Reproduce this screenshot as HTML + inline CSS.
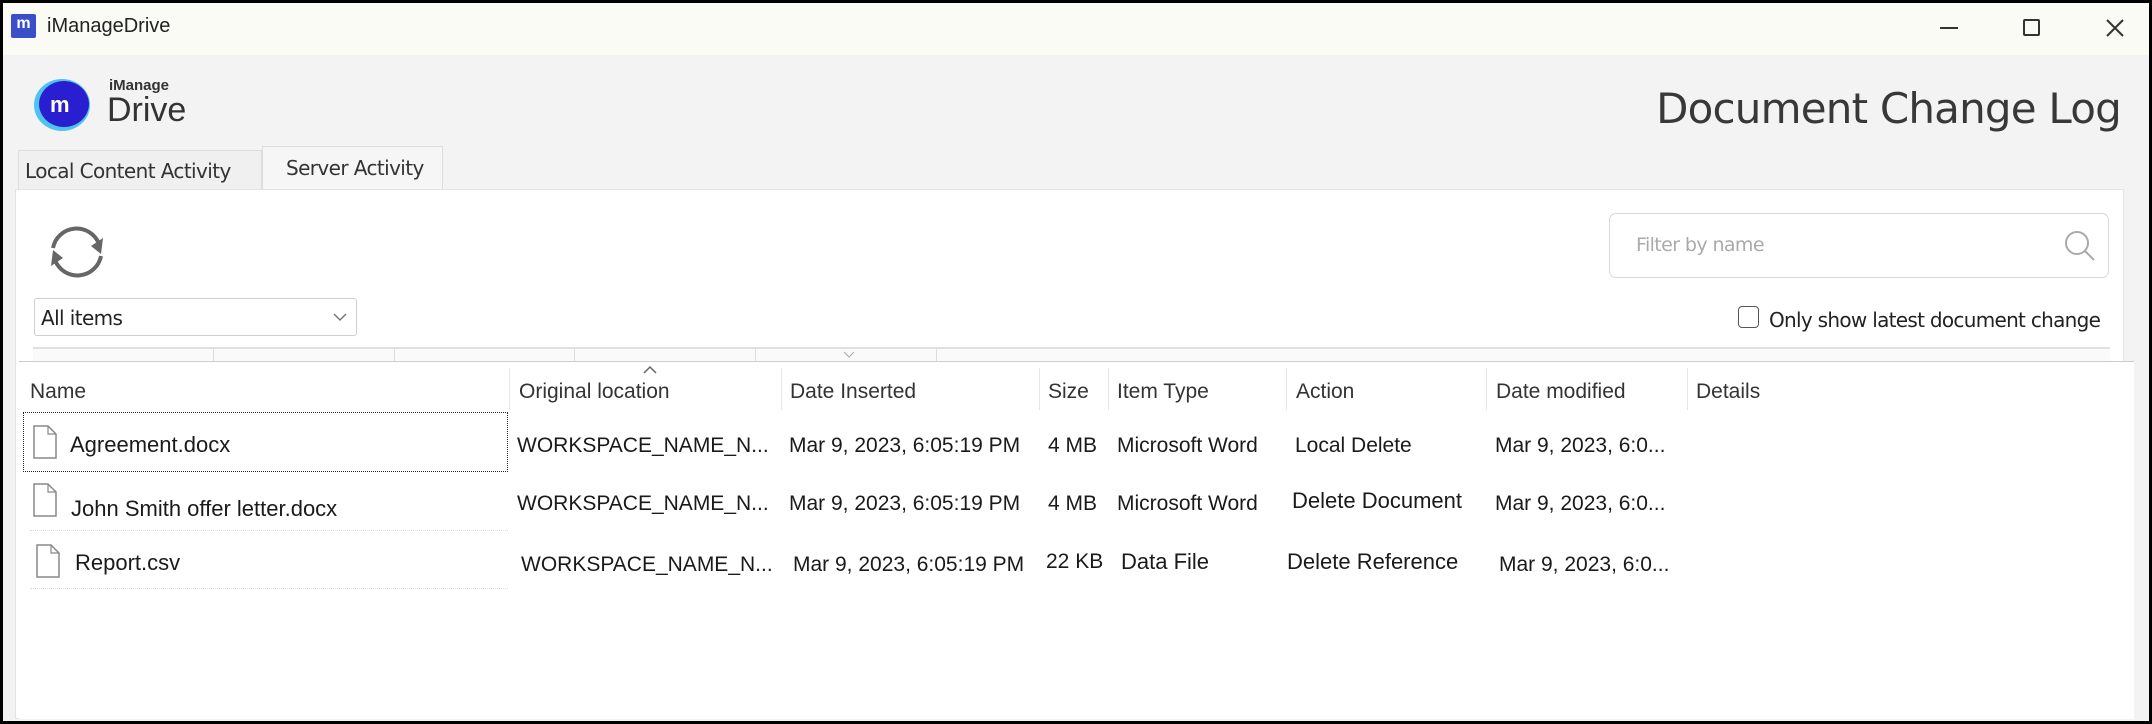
<!DOCTYPE html>
<html><head><meta charset="utf-8"><style>
*{margin:0;padding:0;box-sizing:border-box}
body{width:2152px;height:724px;background:#000;position:relative;overflow:hidden;font-family:"Liberation Sans Narrow","Liberation Sans",sans-serif;color:#222}
.a{position:absolute;white-space:nowrap}
#win{position:absolute;left:3px;top:3px;width:2146px;height:718px;background:#f3f3f3}
#tb{position:absolute;left:0;top:0;width:2146px;height:52px;background:#fbfbf5}
.t{font-size:21px;line-height:24px;color:#1a1a1a}
.h{font-size:21px;line-height:24px;color:#333}
.sep{position:absolute;top:365px;width:1px;height:42px;background:#e6e6e6}
</style></head><body>
<div id="win">
<div id="tb">
<div class="a" style="left:8px;top:11px;width:25px;height:24px;background:#3b4fc8;border-radius:2px;color:#fff;font:bold 16px 'Liberation Sans';text-align:center;line-height:20px">m</div>
<div class="a" style="left:44px;top:12px;font:20px 'Liberation Sans',sans-serif;color:#222">iManageDrive</div>
<div class="a" style="left:1937px;top:24px;width:18px;height:2px;background:#333"></div>
<div class="a" style="left:2020px;top:16px;width:17px;height:17px;border:2px solid #333;border-radius:2px"></div>
<svg class="a" style="left:2102px;top:15px" width="20" height="20"><path d="M2 2L18 18M18 2L2 18" stroke="#333" stroke-width="2"/></svg>
</div>
<svg class="a" style="left:30px;top:72px" width="60" height="60"><ellipse cx="29" cy="30" rx="28" ry="26" fill="#4fc3f0"/><ellipse cx="31" cy="29" rx="25" ry="23" fill="#2a1fd0"/><text x="17" y="37" font-family="Liberation Sans" font-size="22" font-weight="bold" fill="#fff">m</text></svg>
<div class="a" style="left:106px;top:74px;font:bold 15px 'Liberation Sans';color:#333">iManage</div>
<div class="a" style="left:104px;top:88px;font:34px 'Liberation Sans';color:#333">Drive</div>
<div class="a" style="right:28px;top:81px;font:42px 'DejaVu Sans',sans-serif;color:#383838;letter-spacing:-0.8px">Document Change Log</div>
<div class="a" style="left:15px;top:147px;width:244px;height:42px;background:#f0f0f0;border:1px solid #ddd;border-bottom:none"></div>
<div class="a" style="left:22px;top:156px;font:20px 'DejaVu Sans',sans-serif;color:#333;letter-spacing:-0.6px">Local Content Activity</div>
<div class="a" style="left:259px;top:143px;width:181px;height:46px;background:#f6f6f6;border:1px solid #ddd;border-bottom:none"></div>
<div class="a" style="left:283px;top:153px;font:20px 'DejaVu Sans',sans-serif;color:#333;letter-spacing:-0.6px">Server Activity</div>
<div class="a" style="left:12px;top:186px;width:2109px;height:530px;background:#fff;border:1px solid #e4e4e4"></div>
<svg class="a" style="left:38px;top:213px" width="72" height="72"><g fill="none" stroke="#666" stroke-width="4"><path d="M12 32A24 24 0 0 1 58 28"/><path d="M60 40A24 24 0 0 1 14 44"/></g><path d="M62 22L60 38L50 30Z" fill="#666"/><path d="M10 50L12 34L22 42Z" fill="#666"/></svg>
<div class="a" style="left:31px;top:295px;width:323px;height:38px;border:1px solid #cfcfcf;border-radius:3px;background:#fff"></div>
<div class="a" style="left:38px;top:303px;font:20px 'DejaVu Sans',sans-serif;color:#222;letter-spacing:-0.6px">All items</div>
<svg class="a" style="left:330px;top:309px" width="14" height="10"><path d="M1 2L7 8L13 2" fill="none" stroke="#777" stroke-width="1.5"/></svg>
<div class="a" style="left:1606px;top:210px;width:500px;height:65px;border:1px solid #d8d8d8;border-radius:7px;background:#fff"></div>
<div class="a" style="left:1633px;top:231px;font:19px 'DejaVu Sans',sans-serif;color:#aaa;letter-spacing:-0.6px">Filter by name</div>
<svg class="a" style="left:2060px;top:226px" width="34" height="34"><circle cx="14" cy="14" r="11" fill="none" stroke="#aaa" stroke-width="2"/><path d="M22 22L31 31" stroke="#aaa" stroke-width="2"/></svg>
<div class="a" style="left:1735px;top:303px;width:21px;height:22px;border:1.5px solid #555;border-radius:4px;background:#fff"></div>
<div class="a" style="left:1766px;top:305px;font:20px 'DejaVu Sans',sans-serif;color:#222;letter-spacing:-0.7px">Only show latest document change</div>
<div class="a" style="left:30px;top:344px;width:2077px;height:14px;border-top:2px solid #e0e0e0;background:#fafafa"></div>
<div class="a" style="left:210px;top:346px;width:1px;height:12px;background:#ddd"></div>
<div class="a" style="left:391px;top:346px;width:1px;height:12px;background:#ddd"></div>
<div class="a" style="left:571px;top:346px;width:1px;height:12px;background:#ddd"></div>
<div class="a" style="left:752px;top:346px;width:1px;height:12px;background:#ddd"></div>
<div class="a" style="left:933px;top:346px;width:1px;height:12px;background:#ddd"></div>
<svg class="a" style="left:840px;top:348px" width="12" height="8"><path d="M1 1L6 6L11 1" fill="none" stroke="#aaa"/></svg>
<div class="a" style="left:16px;top:358px;width:2115px;height:358px;background:#fff;border-top:1px solid #ccc"></div>
<svg class="a" style="left:640px;top:362px" width="14" height="9"><path d="M1 8L7 2L13 8" fill="none" stroke="#666" stroke-width="1.5"/></svg>
<div class="sep" style="left:506px"></div><div class="sep" style="left:778px"></div><div class="sep" style="left:1036px"></div><div class="sep" style="left:1105px"></div><div class="sep" style="left:1283px"></div><div class="sep" style="left:1483px"></div><div class="sep" style="left:1684px"></div>
<div class="a h" style="left:27px;top:377px">Name</div>
<div class="a h" style="left:516px;top:377px">Original location</div>
<div class="a h" style="left:787px;top:377px">Date Inserted</div>
<div class="a h" style="left:1045px;top:377px">Size</div>
<div class="a h" style="left:1114px;top:377px">Item Type</div>
<div class="a h" style="left:1293px;top:377px">Action</div>
<div class="a h" style="left:1493px;top:377px">Date modified</div>
<div class="a h" style="left:1693px;top:377px">Details</div>
<div class="a" style="left:20px;top:409px;width:485px;height:60px;border:1.5px dotted #222"></div>
<div class="a" style="left:27px;top:527px;width:478px;border-top:1px dotted #ddd"></div>
<div class="a" style="left:27px;top:585px;width:478px;border-top:1px dotted #ddd"></div>
<svg class="a" style="left:30px;top:422px" width="24" height="34"><path d="M1 1H15L23 9V33H1Z" fill="#fff" stroke="#888" stroke-width="1.5"/><path d="M15 1V9H23" fill="none" stroke="#888" stroke-width="1.2"/></svg>
<svg class="a" style="left:30px;top:480px" width="24" height="34"><path d="M1 1H15L23 9V33H1Z" fill="#fff" stroke="#888" stroke-width="1.5"/><path d="M15 1V9H23" fill="none" stroke="#888" stroke-width="1.2"/></svg>
<svg class="a" style="left:33px;top:541px" width="24" height="34"><path d="M1 1H15L23 9V33H1Z" fill="#fff" stroke="#888" stroke-width="1.5"/><path d="M15 1V9H23" fill="none" stroke="#888" stroke-width="1.2"/></svg>
<div class="a t" style="left:67px;top:430px;font-size:22px">Agreement.docx</div>
<div class="a t" style="left:68px;top:494px;font-size:22px">John Smith offer letter.docx</div>
<div class="a t" style="left:72px;top:548px;font-size:22px">Report.csv</div>
<div class="a t" style="left:514px;top:431px">WORKSPACE_NAME_N...</div>
<div class="a t" style="left:514px;top:489px">WORKSPACE_NAME_N...</div>
<div class="a t" style="left:518px;top:550px">WORKSPACE_NAME_N...</div>
<div class="a t" style="left:786px;top:431px">Mar 9, 2023, 6:05:19 PM</div>
<div class="a t" style="left:786px;top:489px">Mar 9, 2023, 6:05:19 PM</div>
<div class="a t" style="left:790px;top:550px">Mar 9, 2023, 6:05:19 PM</div>
<div class="a t" style="left:1045px;top:431px">4 MB</div>
<div class="a t" style="left:1045px;top:489px">4 MB</div>
<div class="a t" style="left:1043px;top:547px">22 KB</div>
<div class="a t" style="left:1114px;top:431px">Microsoft Word</div>
<div class="a t" style="left:1114px;top:489px">Microsoft Word</div>
<div class="a t" style="left:1118px;top:547px;font-size:22px">Data File</div>
<div class="a t" style="left:1292px;top:431px">Local Delete</div>
<div class="a t" style="left:1289px;top:486px;font-size:22px">Delete Document</div>
<div class="a t" style="left:1284px;top:547px;font-size:22px">Delete Reference</div>
<div class="a t" style="left:1492px;top:431px">Mar 9, 2023, 6:0...</div>
<div class="a t" style="left:1492px;top:489px">Mar 9, 2023, 6:0...</div>
<div class="a t" style="left:1496px;top:550px">Mar 9, 2023, 6:0...</div>
</div>
</body></html>
